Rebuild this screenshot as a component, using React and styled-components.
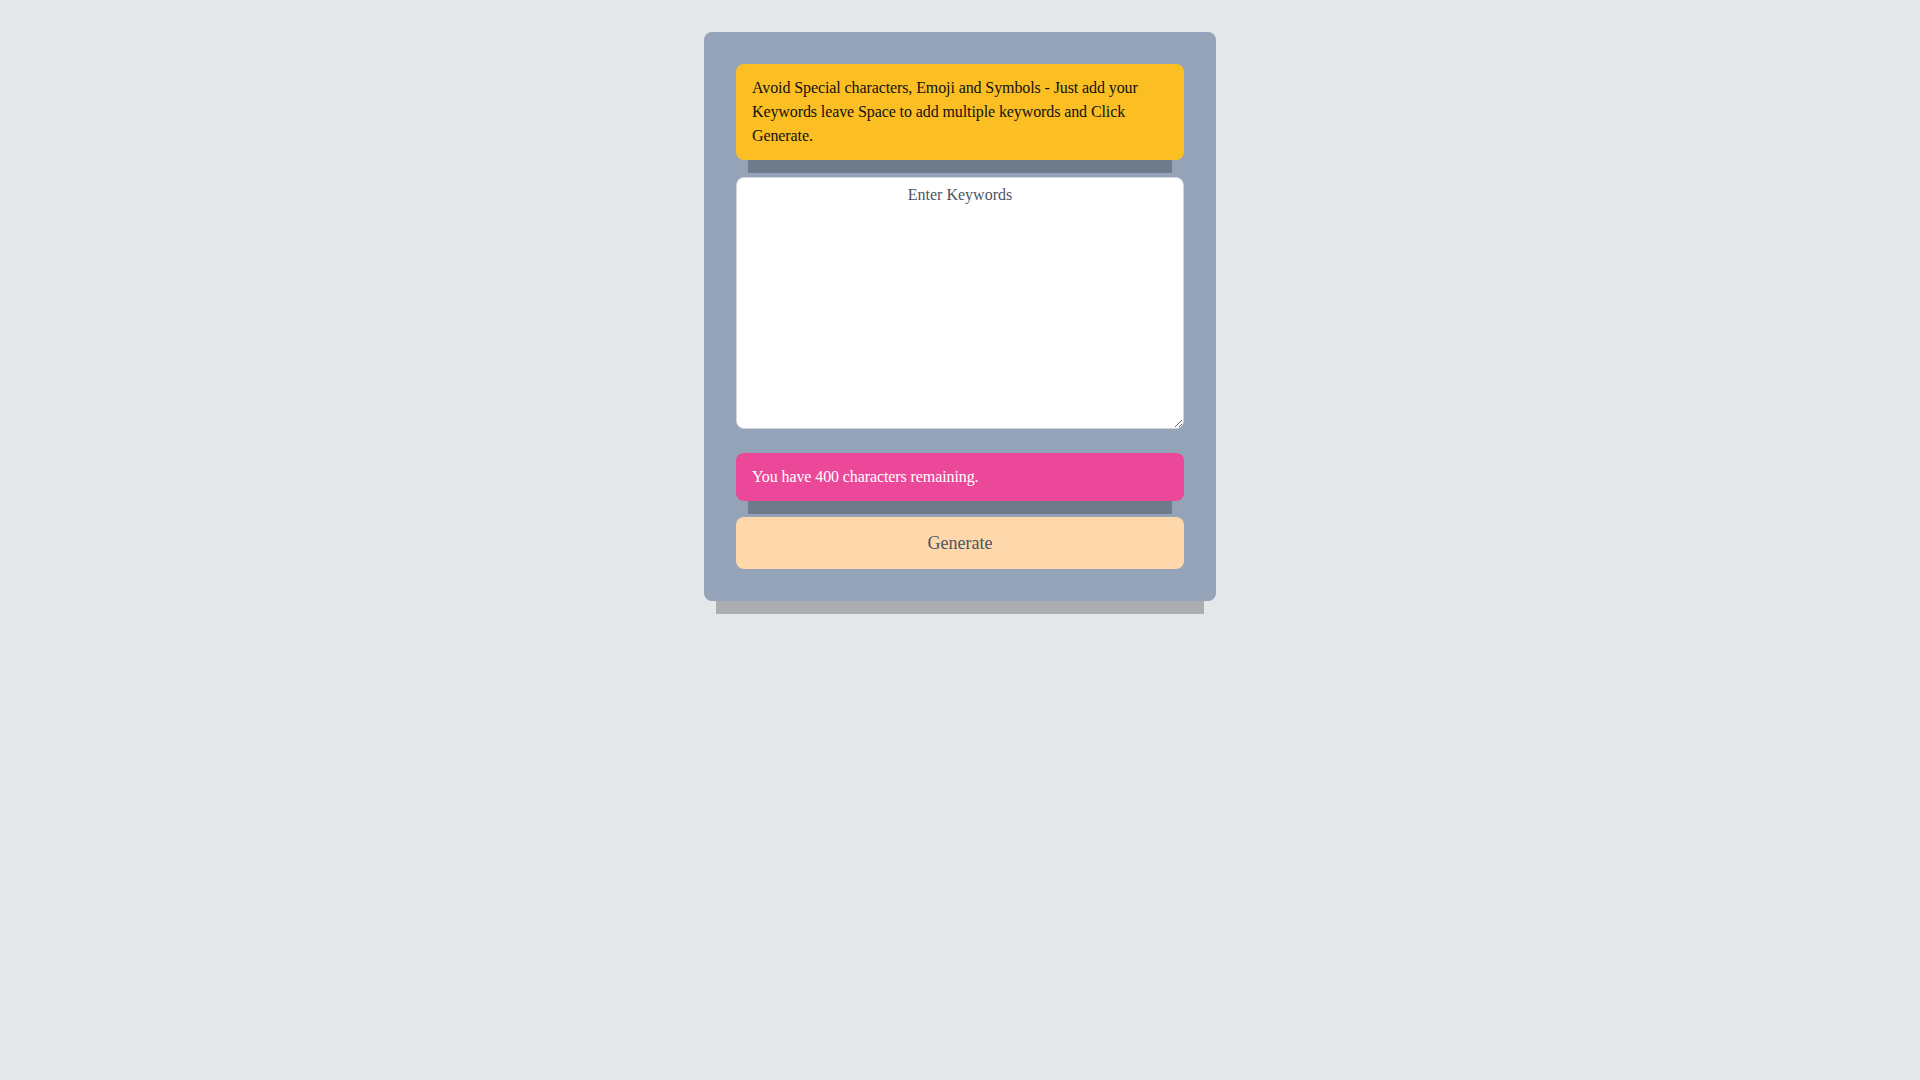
import styled, { createGlobalStyle } from 'styled-components';

const GlobalStyle = createGlobalStyle`
	body {
		margin: 0;
		background: #e5e7eb;
		font-family: serif;
	}
`;

export default function App() {
	return (
		<>
			<GlobalStyle />
			<Page>
				<Card>
					<Notice tone="warning">
						Avoid Special characters, Emoji and Symbols - Just add your Keywords leave Space to add
						multiple keywords and Click Generate.
					</Notice>
					<Keywords placeholder="Enter Keywords" />
					<Notice tone="count">You have 400 characters remaining.</Notice>
					<GenerateBtn type="button">Generate</GenerateBtn>
				</Card>
			</Page>
		</>
	);
}

const Page = styled.div`
	display: flex;
	justify-content: center;
	padding: 32px 0 48px;
`;

const Card = styled.div`
	width: 512px;
	box-sizing: border-box;
	padding: 32px;
	background: #94a3b8;
	border-radius: 8px;
	box-shadow: 0 25px 0 -12px rgba(0, 0, 0, 0.25);
	display: flex;
	flex-direction: column;
`;

const Notice = styled.div`
	padding: 12px 16px;
	font-size: 16px;
	line-height: 24px;
	letter-spacing: -0.1px;
	border-radius: 8px;
	background: ${(props) => (props.tone === 'warning' ? '#fbbf24' : '#ec4899')};
	color: ${(props) => (props.tone === 'warning' ? '#111111' : '#ffffff')};
	box-shadow: 0 25px 0 -12px rgba(0, 0, 0, 0.25);
	margin-bottom: ${(props) => (props.tone === 'warning' ? '17px' : '16px')};
`;

const Keywords = styled.textarea`
	display: block;
	box-sizing: border-box;
	width: 100%;
	height: 252px;
	margin: 0 0 24px;
	padding: 8px 12px;
	border: 1px solid #d1d5db;
	border-radius: 8px;
	background: #ffffff;
	font-family: serif;
	font-size: 16px;
	text-align: center;
	color: #111827;
	outline: none;
	&::placeholder {
		color: #4b5563;
	}
`;

const GenerateBtn = styled.button`
	display: block;
	width: 100%;
	padding: 12px 16px;
	border: none;
	border-radius: 8px;
	background: #fed7aa;
	color: #4b5563;
	font-family: serif;
	font-size: 18px;
	line-height: 28px;
	cursor: pointer;
`;
